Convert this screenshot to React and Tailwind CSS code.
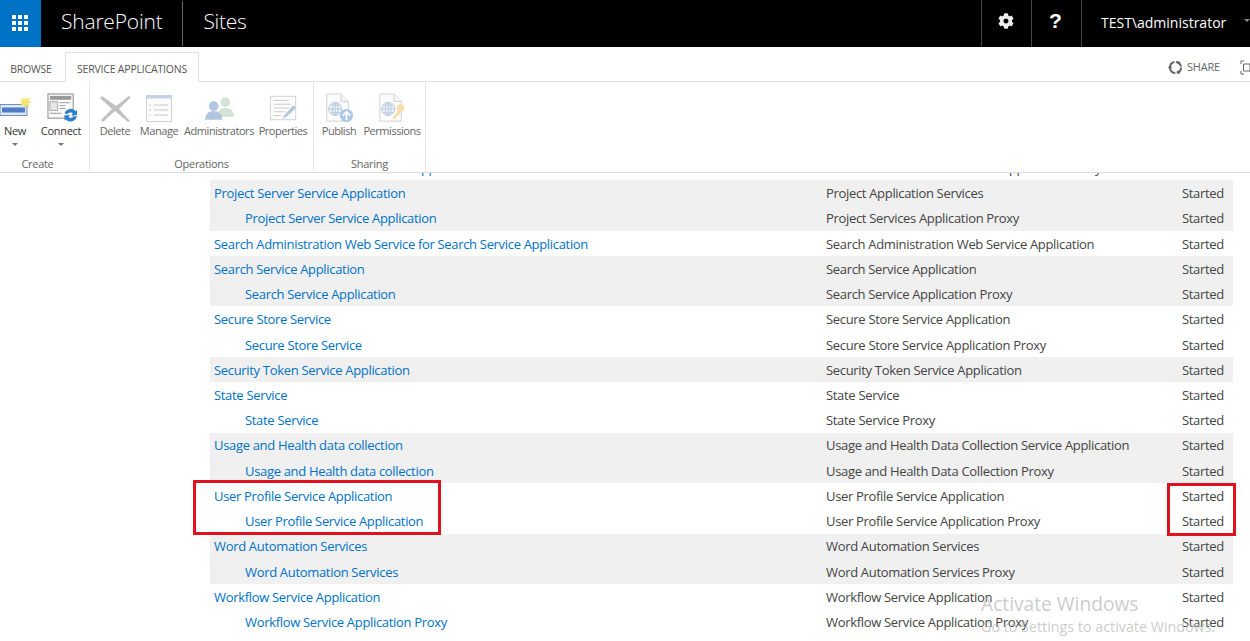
import React from "react";
import { FaCog } from "react-icons/fa";

const font = "font-['Open_Sans','Noto_Sans',sans-serif]";
const rows = [
  ["Project Server Service Application", "Project Application Services", 0, 1],
  ["Project Server Service Application", "Project Services Application Proxy", 1, 1],
  ["Search Administration Web Service for Search Service Application", "Search Administration Web Service Application", 0, 0],
  ["Search Service Application", "Search Service Application", 0, 1],
  ["Search Service Application", "Search Service Application Proxy", 1, 1],
  ["Secure Store Service", "Secure Store Service Application", 0, 0],
  ["Secure Store Service", "Secure Store Service Application Proxy", 1, 0],
  ["Security Token Service Application", "Security Token Service Application", 0, 1],
  ["State Service", "State Service", 0, 0],
  ["State Service", "State Service Proxy", 1, 0],
  ["Usage and Health data collection", "Usage and Health Data Collection Service Application", 0, 1],
  ["Usage and Health data collection", "Usage and Health Data Collection Proxy", 1, 1],
  ["User Profile Service Application", "User Profile Service Application", 0, 0],
  ["User Profile Service Application", "User Profile Service Application Proxy", 1, 0],
  ["Word Automation Services", "Word Automation Services", 0, 1],
  ["Word Automation Services", "Word Automation Services Proxy", 1, 1],
  ["Workflow Service Application", "Workflow Service Application", 0, 0],
  ["Workflow Service Application Proxy", "Workflow Service Application Proxy", 1, 0],
];

function Btn({ label, w, children }) {
  return (
    <div className={`flex flex-col items-center ${w}`}>
      <div className="h-[32px] flex items-center justify-center opacity-45">{children}</div>
      <span className="text-[11px] leading-[14px] whitespace-nowrap tracking-[-0.45px] text-[#666]">{label}</span>
    </div>
  );
}

function Caret() {
  return <div className="mt-[5px] w-0 h-0 border-x-[3px] border-x-transparent border-t-[3px] border-t-[#777]" />;
}

function Group({ w, label, labelClass = "", children }) {
  return (
    <div className={`${w} h-full flex flex-col border-r border-[#e8e8e8] shrink-0`}>
      <div className="flex-1 min-h-0 flex items-start pt-[10px]">{children}</div>
      <div className={`h-[17px] text-center text-[11px] leading-[18px] text-[#666] tracking-[-0.3px] ${labelClass}`}>{label}</div>
    </div>
  );
}

function PageIcon({ children }) {
  return (
    <svg width="30" height="30" viewBox="0 0 32 32">
      <path d="M3 1h15l8 8v21H3z" fill="#fafafa" stroke="#999" />
      <path d="M18 1v8h8" fill="#eee" stroke="#999" />
      <circle cx="12" cy="17" r="7" fill="#dbe7f2" stroke="#5f8ab4" />
      <path d="M5 17h14M12 10v14M7 13h10M7 21h10" stroke="#5f8ab4" fill="none" />
      <ellipse cx="12" cy="17" rx="3" ry="7" fill="none" stroke="#5f8ab4" />
      {children}
    </svg>
  );
}

export default function App() {
  return (
    <div className={`relative h-[641px] w-[1250px] overflow-hidden bg-white ${font}`}>
      <header className="h-[47px] bg-black flex items-stretch text-white">
        <div className="w-[41px] bg-[#0072c6] flex items-center justify-center pb-[2px] pr-[2px]">
          <div className="grid grid-cols-3 gap-[2px]">
            {Array.from({ length: 9 }).map((_, i) => <div key={i} className="w-[4px] h-[4px] bg-white" />)}
          </div>
        </div>
        <div className="pl-[20px] pr-[20px] flex items-center text-[21px] tracking-[-0.2px] font-light pb-[3px]">SharePoint</div>
        <div className="w-px my-[1px] bg-[#666]" />
        <div className="pl-[20px] flex items-center text-[21px] tracking-[-0.3px] font-light pb-[3px]">Sites</div>
        <div className="flex-1" />
        <div className="w-[50px] border-l border-[#444] flex items-center justify-center pb-[6px] pr-[2px]">
          <FaCog size={16} className="text-[#eee]" />
        </div>
        <div className="w-[50px] border-l border-[#444] flex items-center justify-center text-[21px] font-bold pb-[5px] pr-[2px] font-['Liberation_Sans',sans-serif]">?</div>
        <div className="relative w-[169px] border-l border-[#444] pl-[19px] flex items-center text-[14px] whitespace-nowrap pb-[3px]">
          TEST\administrator
          <div className="absolute right-0 top-[19px] w-0 h-0 border-x-[3px] border-x-transparent border-t-[3px] border-t-[#888]" />
        </div>
      </header>

      <div className="h-[35px] bg-white border-b border-[#e1e1e1] flex items-end relative">
        <div className="w-[65px] h-[28px] pr-[3px] text-center text-[10.5px] leading-[33px] text-[#555] tracking-[-0.2px]">BROWSE</div>
        <div className="w-[134px] h-[30px] -mb-px bg-white border-x border-t border-[#e1e1e1] text-center text-[10.5px] leading-[32px] text-[#555] tracking-[-0.2px] whitespace-nowrap">SERVICE APPLICATIONS</div>
        <div className="flex-1" />
        <div className="flex items-center h-full pt-[7px] text-[11px] text-[#666] tracking-[-0.2px]">
          <svg width="15" height="15" viewBox="0 0 15 15" className="mr-[4px]">
            <circle cx="7.500" cy="7.500" r="5.500" fill="none" stroke="#666" strokeWidth="2" strokeDasharray="7 1.600" />
            <circle cx="2" cy="7.500" r="1.600" fill="#666" />
            <circle cx="10.500" cy="2.800" r="1.600" fill="#666" />
            <circle cx="10.500" cy="12.200" r="1.600" fill="#666" />
          </svg>
          SHARE
        </div>
        <div className="w-[30px] h-full flex items-center justify-end pt-[7px]">
          <svg width="10" height="15" viewBox="0 0 10 15"><path d="M4 1H1v3M1 11v3h3M3.500 4h6.500v7H3.500z" fill="none" stroke="#666" /></svg>
        </div>
      </div>

      <div className="h-[91px] border-b border-[#dcdcdc] flex">
        <Group w="w-[90px]" label="Create" labelClass="pr-[14px]">
          <div className="flex">
            <div className="w-[30px] flex flex-col items-center">
              <div className="h-[32px] flex items-start pt-[3px] self-start">
                <svg width="32" height="24" viewBox="0 0 32 24">
                  <rect x="0" y="9.500" width="27" height="11" fill="#dfe8f4" stroke="#6f8fb8" />
                  <rect x="2" y="12.500" width="23" height="5" fill="#4f7cc4" />
                  <path d="M25 1l1.500 3.500L30 2l-1.500 4 3.500 1-3.500 1.500 1.500 4-3.500-2.500L25 13l-1-3-4 1.500 2-3.500-3-1 3.500-1-1-3.500 3.500 2z" fill="#f5e36f" />
                </svg>
              </div>
              <span className="text-[11px] leading-[14px] text-[#333] tracking-[-0.3px]">New</span>
              <Caret />
            </div>
            <div className="w-[62px] flex flex-col items-center">
              <div className="h-[32px] flex items-start pl-[3px] pt-[1px]">
                <svg width="31" height="30" viewBox="0 0 32 31">
                  <rect x="1" y="1" width="26" height="25" fill="#fafafa" stroke="#888" />
                  <rect x="3" y="3" width="22" height="4" fill="#999" />
                  <rect x="3" y="9" width="8" height="9" fill="#e5e5e5" stroke="#aaa" />
                  <path d="M13 10h11M13 13h6M13 16h6M3 21h12" stroke="#999" />
                  <path d="M18 21a7 7 0 0 1 12-2l1-2v6h-6l2-2a4 4 0 0 0-6 1z" fill="#2b7fcb" />
                  <path d="M31 24a7 7 0 0 1-12 3l-1 2v-6h6l-2 2a4 4 0 0 0 6-1z" fill="#2b7fcb" />
                </svg>
              </div>
              <span className="text-[11px] leading-[14px] text-[#333] tracking-[-0.3px]">Connect</span>
              <Caret />
            </div>
          </div>
        </Group>

        <Group w="w-[224px]" label="Operations">
          <div className="flex">
            <Btn label="Delete" w="w-[50px]">
              <svg width="31" height="27" viewBox="0 0 31 27"><path d="M2 1l14 10L29 1l1.500 1.500L19 14l11 12-2 1-13-11L3 27l-2-2 11-11L0 3z" fill="#777" /></svg>
            </Btn>
            <Btn label="Manage" w="w-[38px]">
              <svg width="26" height="27" viewBox="0 0 26 27">
                <rect x="0.500" y="0.500" width="25" height="26" fill="#fafafa" stroke="#999" />
                <rect x="0" y="0" width="26" height="3.500" fill="#7f9cc0" />
                <path d="M8 10h14M8 15h14M8 20h14M3 10h2M3 15h2M3 20h2" stroke="#888" />
              </svg>
            </Btn>
            <Btn label="Administrators" w="w-[82px]">
              <svg width="31" height="26" viewBox="0 0 32 26">
                <circle cx="22" cy="7" r="5" fill="#9fc3a8" />
                <path d="M14 22c0-7 4-9 8-9s9 2 9 9z" fill="#9fc3a8" />
                <circle cx="10" cy="11" r="5" fill="#4f83b8" />
                <path d="M1 25c0-6 4-9 9-9s9 3 9 9z" fill="#4f83b8" />
              </svg>
            </Btn>
            <Btn label="Properties" w="w-[46px]">
              <svg width="30" height="28" viewBox="0 0 32 28">
                <rect x="2.500" y="1.500" width="27" height="25" fill="#fafafa" stroke="#999" />
                <path d="M6 6h16M6 10h18M6 14h16M6 18h12M6 22h8" stroke="#888" />
                <path d="M15 26l3-5 9-10 3 3-10 9z" fill="#4f8ac5" />
              </svg>
            </Btn>
          </div>
        </Group>

        <Group w="w-[112px]" label="Sharing">
          <div className="flex">
            <Btn label="Publish" w="w-[50px]">
              <PageIcon>
                <circle cx="24" cy="24" r="7" fill="#3f86c8" />
                <path d="M24 29v-9M20 24l4-4 4 4" stroke="#fff" strokeWidth="2" fill="none" />
              </PageIcon>
            </Btn>
            <Btn label="Permissions" w="w-[56px]">
              <PageIcon>
                <circle cx="25" cy="16" r="4" fill="#f0b64a" />
                <path d="M23 18l-7 9 3 1 7-8z" fill="#f0b64a" />
              </PageIcon>
            </Btn>
          </div>
        </Group>
      </div>

      <main className="h-[468px] overflow-hidden pl-[210px] pr-[17px]">
        <div className="-mt-[18px] text-[13px] tracking-[-0.32px]">
          <div className="h-[25.240px] flex items-center pt-[2px]">
            <span className="pl-[51px] w-[616px] shrink-0 text-[#0072c6] whitespace-nowrap">PerformancePoint Service Application</span>
            <span className="flex-1 pl-[23px] text-[#444] whitespace-nowrap">PerformancePoint Service Application Proxy</span>
          </div>
          {rows.map(([name, type, child, shade], i) => (
            <div key={i} className={`h-[25.240px] flex items-center pt-[2px] ${shade ? "bg-[#f0f0f0]" : ""}`}>
              <span className={`w-[616px] shrink-0 text-[#0072c6] whitespace-nowrap ${child ? "pl-[35px]" : "pl-[4px]"}`}>{name}</span>
              <span className="flex-1 text-[#444] whitespace-nowrap">{type}</span>
              <span className="w-[51px] text-[#444] whitespace-nowrap">Started</span>
            </div>
          ))}
        </div>
      </main>

      <div className="absolute left-[193px] top-[480px] w-[248px] h-[55px] border-[3px] border-[#e0121f]" />
      <div className="absolute left-[1167px] top-[483px] w-[69px] h-[53px] border-[3px] border-[#e0121f]" />

      <div className="absolute left-[981px] top-[593px] text-[19.200px] leading-[22px] text-[#b5b5b5]/70 whitespace-nowrap">Activate Windows</div>
      <div className="absolute left-[981px] top-[618px] text-[14.300px] leading-[18px] text-[#b5b5b5]/70 whitespace-nowrap">Go to Settings to activate Windows.</div>
    </div>
  );
}
